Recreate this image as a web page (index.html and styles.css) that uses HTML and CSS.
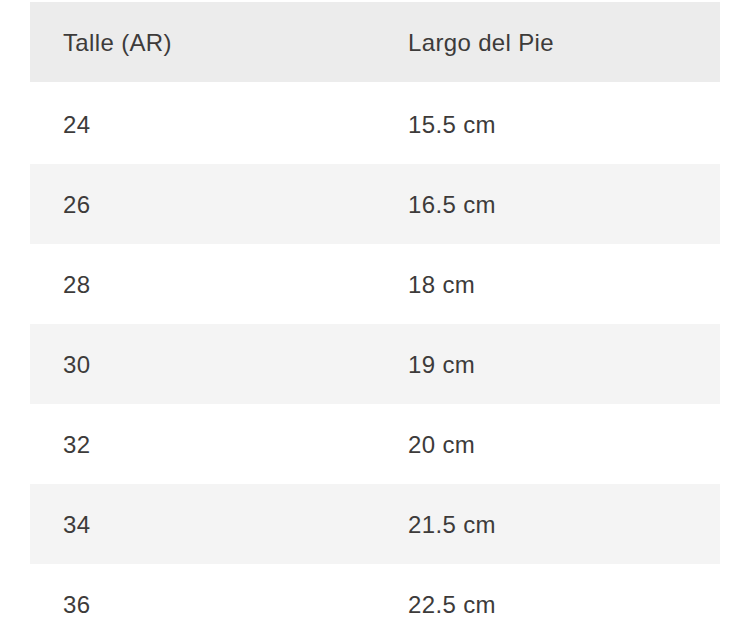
FILE: index.html
```html
<!DOCTYPE html>
<html lang="es">
<head>
<meta charset="utf-8">
<title>Tabla de talles</title>
<link rel="stylesheet" href="styles.css">
</head>
<body>
<table class="size-table">
  <thead>
    <tr><th>Talle (AR)</th><th>Largo del Pie</th></tr>
  </thead>
  <tbody>
    <tr><td>24</td><td>15.5 cm</td></tr>
    <tr><td>26</td><td>16.5 cm</td></tr>
    <tr><td>28</td><td>18 cm</td></tr>
    <tr><td>30</td><td>19 cm</td></tr>
    <tr><td>32</td><td>20 cm</td></tr>
    <tr><td>34</td><td>21.5 cm</td></tr>
    <tr><td>36</td><td>22.5 cm</td></tr>
  </tbody>
</table>
</body>
</html>
```
FILE: styles.css
```css
html, body {
  margin: 0;
  background: #ffffff;
}
body {
  padding: 2px 30px 0;
  font-family: "Liberation Sans", Arial, sans-serif;
  color: #3d3b3a;
}
.size-table {
  width: 690px;
  border-collapse: collapse;
  table-layout: fixed;
}
.size-table th,
.size-table td {
  text-align: left;
  font-weight: normal;
  font-size: 24px;
  letter-spacing: 0.35px;
  padding: 2px 0 0 33px;
  height: 78px;
  box-sizing: content-box;
  vertical-align: middle;
}
.size-table thead tr {
  background: #ececec;
  border-bottom: 2px solid #ffffff;
}
.size-table tbody tr:nth-child(even) {
  background: #f4f4f4;
}
```
